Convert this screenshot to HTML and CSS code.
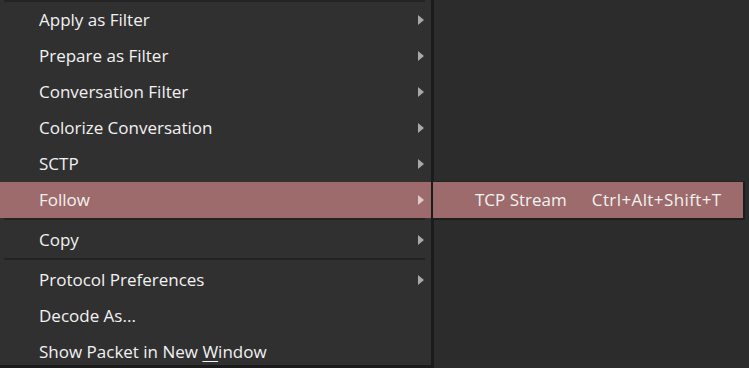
FILE: index.html
```html
<!DOCTYPE html>
<html lang="en">
<head>
    <meta charset="UTF-8">
    <title>Packet context menu</title>
    <link rel="stylesheet" href="styles.css">
</head>
<body>
    <div class="menu">
        <div class="separator first"></div>
        <div class="item has-sub"><span class="label">Apply as Filter</span></div>
        <div class="item has-sub"><span class="label">Prepare as Filter</span></div>
        <div class="item has-sub"><span class="label">Conversation Filter</span></div>
        <div class="item has-sub"><span class="label">Colorize Conversation</span></div>
        <div class="item has-sub"><span class="label">SCTP</span></div>
        <div class="item has-sub active"><span class="label">Follow</span>
            <div class="submenu">
                <div class="sub-item active">
                    <span class="label">TCP Stream</span>
                    <span class="shortcut">Ctrl+Alt+Shift+T</span>
                </div>
            </div>
        </div>
        <div class="separator"></div>
        <div class="item has-sub"><span class="label">Copy</span></div>
        <div class="separator"></div>
        <div class="item has-sub"><span class="label">Protocol Preferences</span></div>
        <div class="item"><span class="label">Decode As...</span></div>
        <div class="item last"><span class="label">Show Packet in New <u>W</u>indow</span></div>
    </div>
</body>
</html>
```

FILE: styles.css
```css
body {
    margin: 0;
    height: 368px;
    overflow: hidden;
    background-color: #2c2c2c;
    font-family: 'Open Sans', 'Noto Sans', sans-serif;
    font-size: 17px;
    color: #f2f2f2;
}

.menu {
    width: 431px;
    background-color: #303030;
    border-right: 3px solid #1b1b1b;
    border-bottom: 3px solid #1b1b1b;
}

.separator {
    height: 2px;
    margin: 0 6px 2px 4px;
    background-color: #232323;
}

.separator.first {
    margin-bottom: 0;
}

.item {
    height: 36px;
    display: flex;
    align-items: center;
    padding-left: 39px;
    position: relative;
}

.item.last {
    height: 31px;
    align-items: flex-start;
}

.item.last .label {
    margin-top: 6px;
}

.item .label {
    margin-top: -2px;
}

.item.active {
    background-color: #9d6b6b;
}

.has-sub::after {
    content: "";
    position: absolute;
    right: 7px;
    top: 13px;
    border-left: 6px solid #a8a8a8;
    border-top: 5px solid transparent;
    border-bottom: 5px solid transparent;
}

.item.active::after {
    border-left-color: #e2caca;
}

u {
    text-decoration-thickness: 1px;
    text-underline-offset: 3px;
}

/* submenu pops out next to the active row */
.submenu {
    position: absolute;
    left: 433px;
    top: -1px;
    width: 310px;
    background-color: #303030;
    border-top: 1px solid #242424;
    border-right: 2px solid #1e1e1e;
    border-bottom: 2px solid #1e1e1e;
}

.sub-item {
    height: 36px;
    display: flex;
    align-items: center;
    padding-left: 42px;
}

.sub-item .label {
    margin-top: -2px;
    white-space: nowrap;
}

.sub-item .shortcut {
    margin-top: -2px;
    margin-left: 25px;
    letter-spacing: 0.4px;
    white-space: nowrap;
}

.sub-item.active {
    background-color: #9d6b6b;
}
```
